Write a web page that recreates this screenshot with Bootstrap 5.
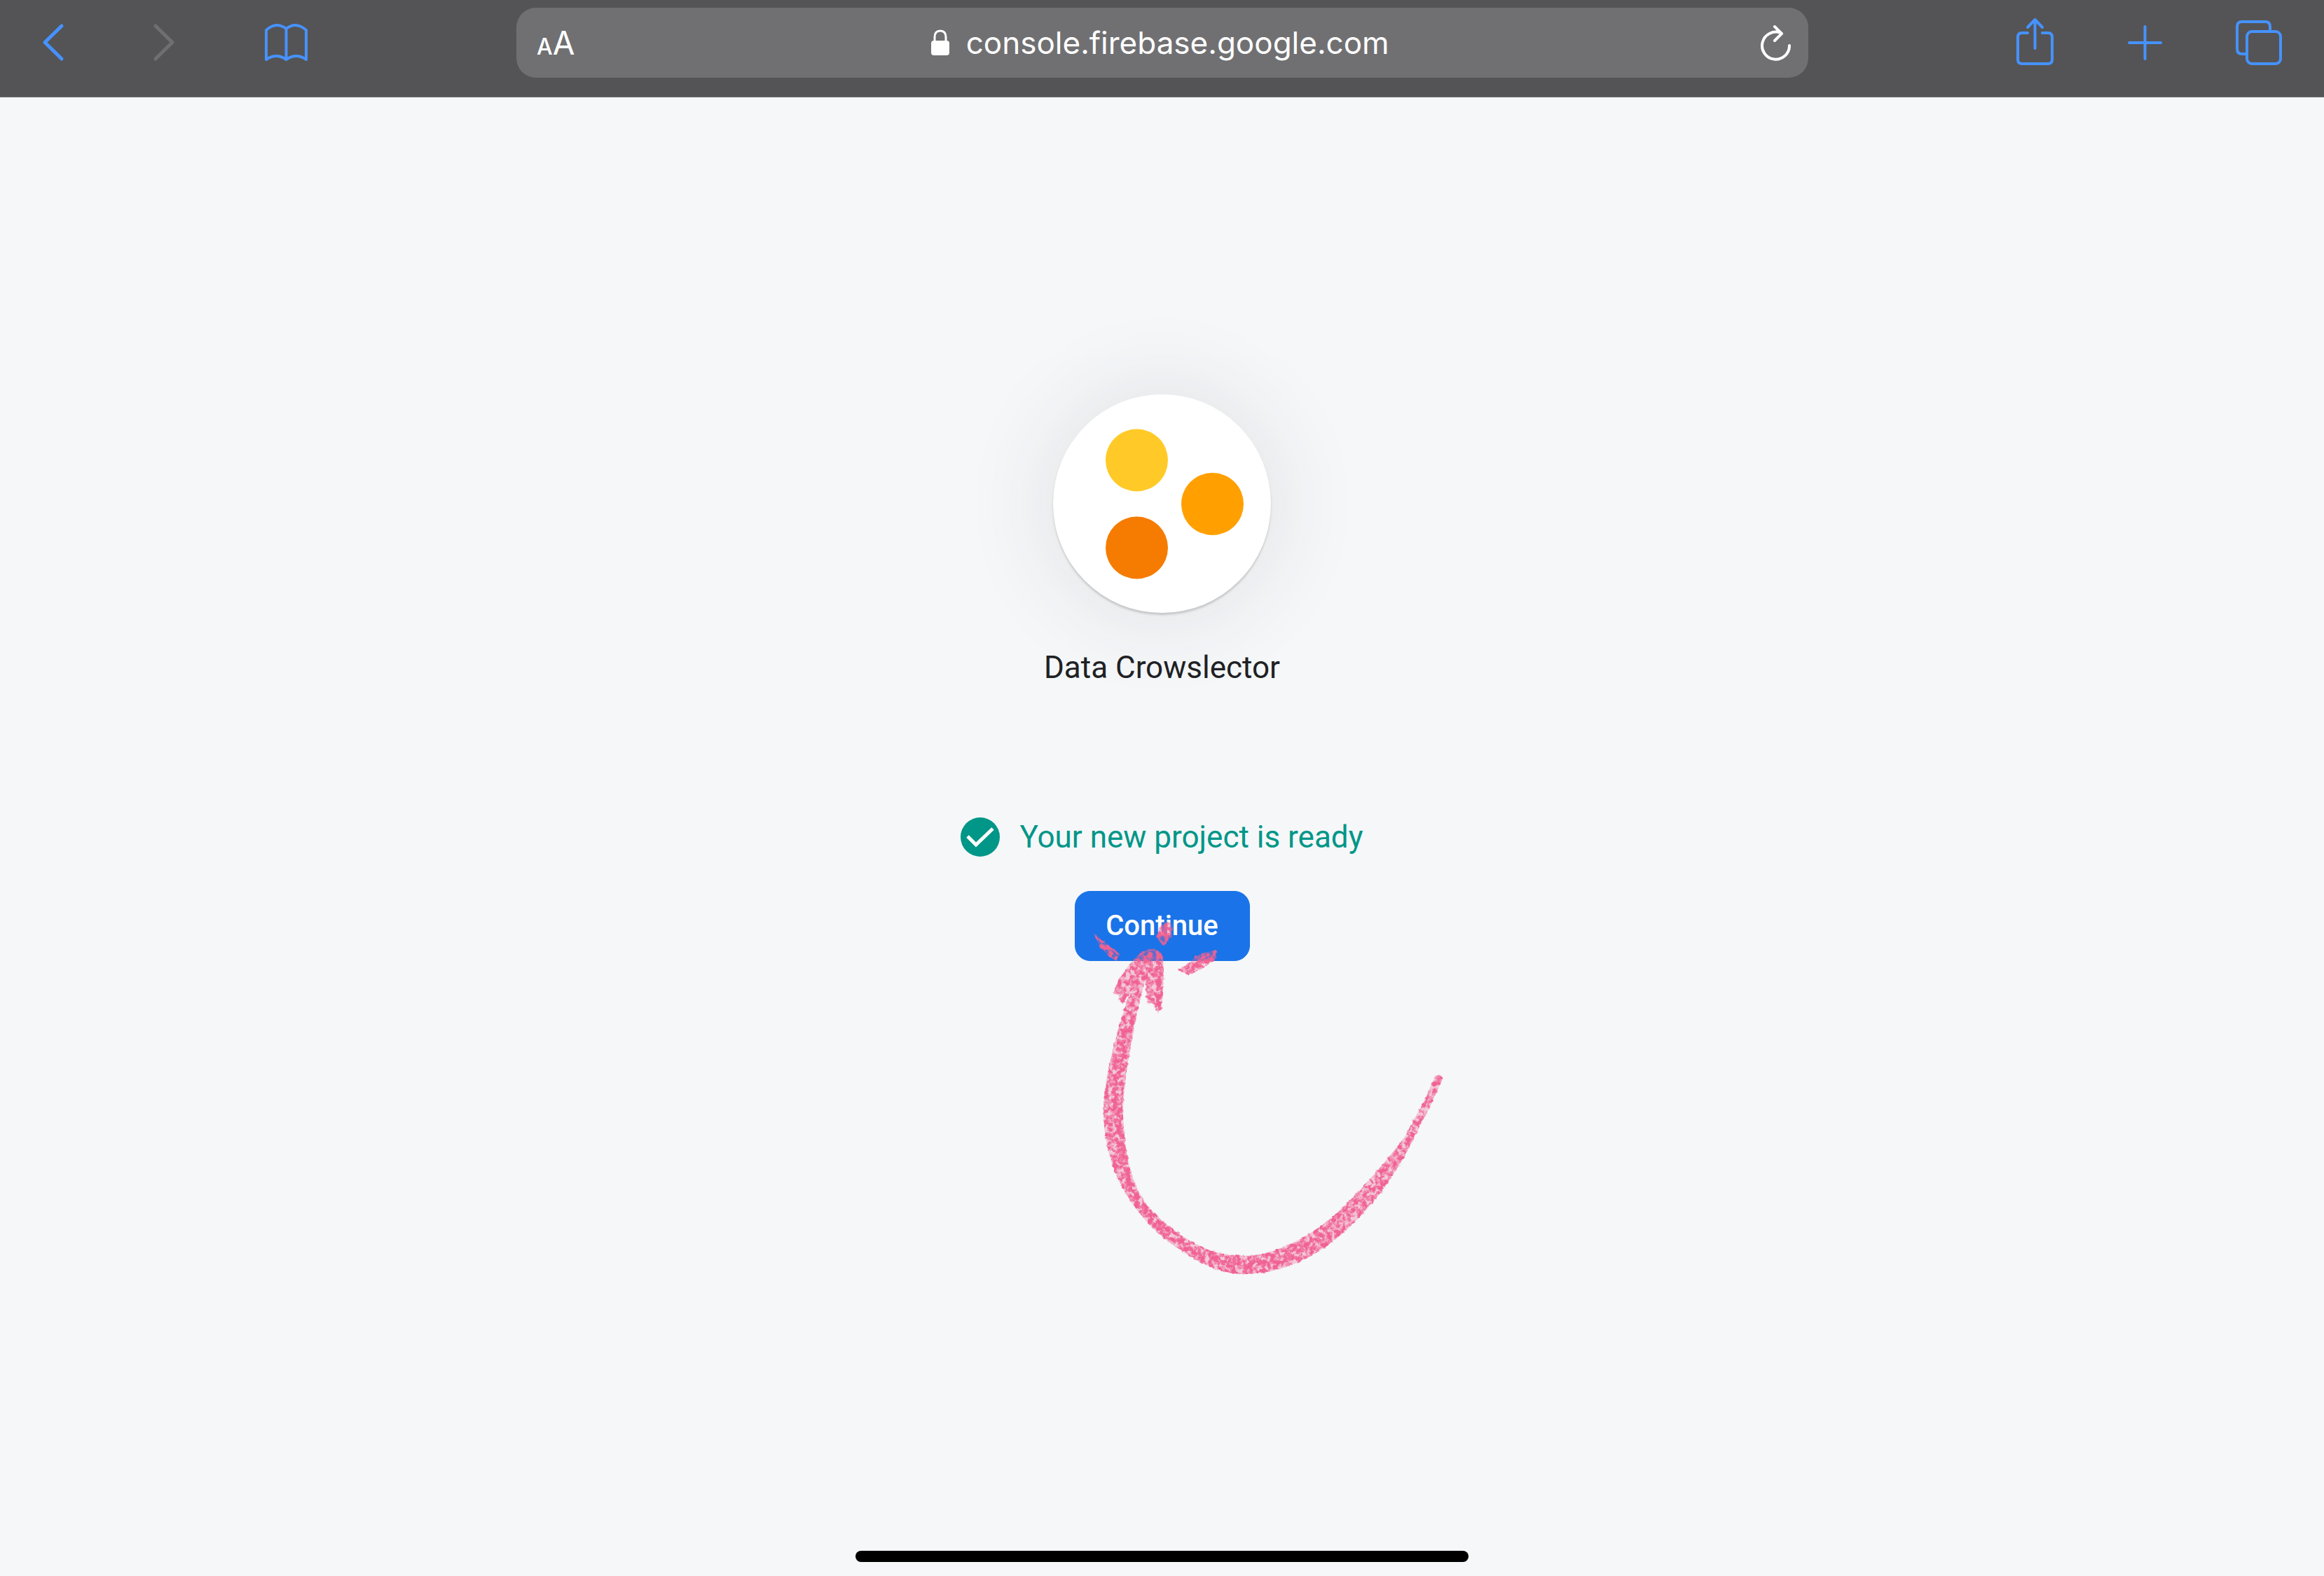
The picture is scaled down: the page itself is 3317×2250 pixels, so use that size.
<!DOCTYPE html>
<html lang="en">
<head>
<meta charset="utf-8">
<meta name="viewport" content="width=device-width, initial-scale=1">
<title>Firebase console</title>
<link href="https://cdn.jsdelivr.net/npm/bootstrap@5.3.0/dist/css/bootstrap.min.css" rel="stylesheet">
<style>
  body { background: #f5f7f9; font-family: Roboto, "Liberation Sans", sans-serif; color: #202124; }
  svg { display: block; overflow: visible; }
  .browser-bar { background: #545456; border-bottom: 1px solid #6d6d6f; padding: 11px 61px 27px; }
  .tool { background: none; border: 0; padding: 0; color: #4692ff; flex: none; }
  .tool:disabled { color: #6f6f71; }
  .tool svg, .reload svg { fill: none; stroke: currentColor; stroke-width: 4; stroke-linecap: round; stroke-linejoin: round; }
  .nav-tools { gap: 128px; }
  .page-tools { gap: 105px; }
  .address { width: 1844px; max-width: 56vw; height: 100px; background: #707072; border-radius: 28px; padding: 0 25px 0 29px; color: #fff; font-family: Inter, "Liberation Sans", sans-serif; }
  .text-size { background: none; border: 0; padding: 6px 0 0; color: #fff; font-size: 46px; line-height: 60px; }
  .text-size span { font-size: 32px; font-weight: 500; }
  .reload { background: none; border: 0; padding: 0; color: #fff; }
  .url { width: 626px; height: 80px; background: none; border: 0; padding: 0; color: #fff; font-size: 44px; line-height: 60px; outline: 0; }
  .stage { padding-top: 424px; }
  .badge-disc { width: 311px; height: 312px; border-radius: 50%; background: #fff; box-shadow: 0 3px 3px rgba(0,0,0,.16), 0 0 135px rgba(60,50,60,.12); }
  .project-name { font-size: 44px; line-height: 60px; margin: 48px 0 0; font-weight: 400; }
  .ready { color: #009688; font-size: 44px; line-height: 60px; margin-top: 182px; gap: 28px; }
  .action { margin-top: 47px; }
  .go { --bs-btn-bg: #1a73e8; --bs-btn-border-color: #1a73e8; --bs-btn-hover-bg: #1967d2; width: 250px; height: 100px; border-radius: 22px; padding: 0; font-size: 40px; line-height: 60px; font-weight: 500; }
  .arrow { pointer-events: none; }
  .home-line { width: 875px; max-width: 80%; height: 16px; border-radius: 8px; background: #000; margin-bottom: 20px; }
</style>
<script src="https://cdn.jsdelivr.net/npm/bootstrap@5.3.0/dist/js/bootstrap.bundle.min.js"></script>
</head>
<body class="d-flex flex-column min-vh-100 overflow-x-hidden">

<header class="browser-bar d-flex align-items-start justify-content-between">
  <nav class="nav-tools d-flex" aria-label="History">
    <button class="tool" type="button" aria-label="Back"><svg width="30" height="100" viewBox="61 11 30 100"><path stroke-width="5" d="M88 37 64 60.500 88 84"/></svg></button>
    <button class="tool" type="button" aria-label="Forward" disabled><svg width="30" height="100" viewBox="219 11 30 100"><path stroke-width="5" d="M222 37l24 23.500L222 84"/></svg></button>
    <button class="tool" type="button" aria-label="Bookmarks"><svg width="62" height="100" viewBox="377 11 62 100"><path d="M380 85V43q14-13 28.500-2q14-11 28.500 2V85q-14-10-28.500 0q-14-10-28.500 0M408.500 41V85"/></svg></button>
  </nav>

  <div class="address d-flex align-items-center">
    <button class="text-size" type="button" aria-label="Text size"><span>A</span>A</button>
    <div class="d-flex flex-grow-1 justify-content-center align-items-center">
      <svg class="me-4" width="26" height="38" viewBox="0 0 26 38"><path d="M5 18V11Q5 2 13 2t8 9v7" fill="none" stroke="#fff" stroke-width="3"/><rect y="16" width="26" height="21" rx="4" fill="#fff"/></svg>
      <label class="visually-hidden" for="url">Address</label>
      <input class="url" id="url" type="text" value="console.firebase.google.com">
    </div>
    <button class="reload" type="button" aria-label="Reload"><svg width="43" height="100" viewBox="2512 11 43 100"><path d="M2553 65A19.500 19.500 0 1 1 2541 47.200M2532 38l10 10-10 10"/></svg></button>
  </div>

  <nav class="page-tools d-flex" aria-label="Page">
    <button class="tool" type="button" aria-label="Share"><svg width="53" height="100" viewBox="2879 11 53 100"><path d="M2894 47h-8q-6 0-6 6V85q0 6 6 6h37q6 0 6-6V53q0-6-6-6h-8M2904.500 69V28M2894 39l10.500-11L2915 39"/></svg></button>
    <button class="tool" type="button" aria-label="New tab"><svg width="49" height="100" viewBox="3036 11 49 100"><path d="M3060.500 38V84M3038 61h45"/></svg></button>
    <button class="tool" type="button" aria-label="Tabs"><svg width="65" height="100" viewBox="3191 11 65 100"><rect x="3207" y="45" width="48" height="46" rx="7"/><path d="M3207 77h-7q-7 0-7-7V38q0-7 7-7h33q7 0 7 7v7"/></svg></button>
  </nav>
</header>

<main class="stage d-flex flex-column align-items-center flex-grow-1">
  <div class="badge-disc">
    <svg width="311" height="312" viewBox="0 0 311 312" aria-hidden="true"><circle cx="119.500" cy="94" r="44.500" fill="#ffca28"/><circle cx="227.500" cy="156.500" r="44.500" fill="#ffa000"/><circle cx="119.500" cy="219" r="44.500" fill="#f57c00"/></svg>
  </div>
  <h1 class="project-name">Data Crowslector</h1>
  <div class="ready d-flex align-items-center" role="status">
    <svg width="56" height="56" viewBox="0 0 56 56" aria-hidden="true"><circle cx="28" cy="28" r="28" fill="#009688"/><path d="M10 27l12 12L46 16" fill="none" stroke="#fff" stroke-width="5"/></svg>
    <span>Your new project is ready</span>
  </div>
  <div class="action position-relative">
    <button class="btn btn-primary go d-block" type="button">Continue</button>
    <svg class="arrow position-absolute top-0 start-0" width="550" height="560" viewBox="1533 1272 550 560" aria-hidden="true">
      <defs>
        <filter id="grain" x="1533" y="1272" width="550" height="560" filterUnits="userSpaceOnUse" color-interpolation-filters="sRGB">
          <feTurbulence type="fractalNoise" baseFrequency=".16" numOctaves="3" seed="4" result="n"/>
          <feColorMatrix in="n" type="matrix" values="0 0 0 0 0  0 0 0 0 0  0 0 0 0 0  0 0 0 3.500 -1.150" result="a"/>
          <feComposite in="SourceGraphic" in2="a" operator="in" result="g"/>
          <feDisplacementMap in="g" in2="n" scale="6" xChannelSelector="R" yChannelSelector="G"/>
        </filter>
        <g id="strokes">
          <path d="M1632 1397Q1610 1413 1604 1440Q1591 1480 1583 1517Q1573 1560 1574 1593Q1575 1632 1590 1673Q1607 1715 1644 1753Q1680 1788 1729 1810Q1755 1820 1779 1819Q1826 1818 1872 1792Q1918 1765 1958 1717Q1994 1674 2019 1620L2040 1580L2057 1542Q2058 1535 2053 1534Q2048 1535 2045 1542L2029 1577L2004 1623Q1974 1663 1936 1703Q1893 1750 1847 1773Q1808 1792 1779 1793Q1750 1793 1726 1785Q1672 1763 1636 1720Q1605 1680 1602 1593Q1602 1550 1613 1493L1620 1453L1633 1400Z"/>
          <path d="M1622 1365Q1632 1355 1643 1355Q1657 1356 1659 1368Q1661 1393 1658 1432L1652 1447L1644 1433L1636 1431L1634 1400L1626 1403Q1612 1415 1608 1423L1600 1433L1595 1421L1588 1418Q1594 1397 1611 1377Z"/>
          <path d="M1560 1333L1598 1362L1592 1372Q1578 1364 1567 1348Z"/>
          <path d="M1666 1315L1673 1322L1670 1337L1660 1351L1649 1338L1654 1323Z"/>
          <path d="M1734 1358L1735 1367Q1722 1382 1694 1392L1681 1384Q1690 1380 1698 1373Q1714 1357 1734 1358Z"/>
        </g>
      </defs>
      <g fill="#f06292">
        <use href="#strokes" opacity=".3"/>
        <use href="#strokes" filter="url(#grain)"/>
        <g filter="url(#grain)" fill="none" stroke="#f06292" stroke-linecap="round">
          <path stroke-width="12" d="M1612 1455Q1592 1540 1594 1593Q1596 1675 1626 1718Q1675 1785 1763 1801Q1830 1806 1890 1760"/>
          <path stroke-width="9" d="M1652 1364Q1656 1398 1652 1438M1572 1347L1592 1364M1665 1322L1660 1344M1728 1364Q1714 1378 1694 1384"/>
        </g>
      </g>
    </svg>
  </div>
</main>

<footer class="d-flex justify-content-center"><div class="home-line"></div></footer>
</body>
</html>
